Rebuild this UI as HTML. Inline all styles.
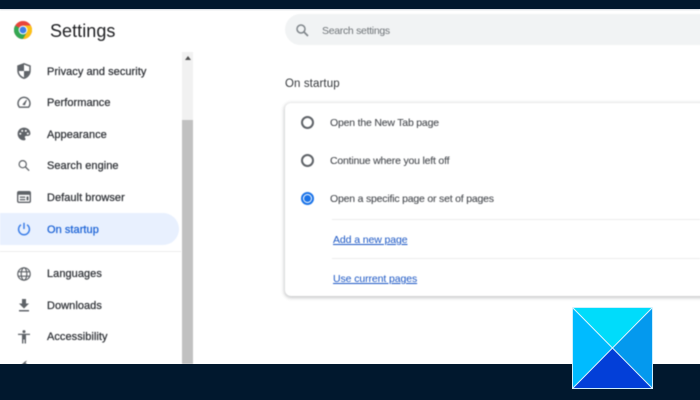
<!DOCTYPE html>
<html><head><meta charset="utf-8">
<style>
html,body{margin:0;padding:0;background:#fff}
#p{position:relative;width:700px;height:400px;overflow:hidden;background:#fff;font-family:"Liberation Sans",sans-serif;color:#3c4043}
#b{position:absolute;left:0;top:0;width:700px;height:400px;filter:blur(.4px)}
.t{position:absolute;white-space:nowrap;font-size:11px;line-height:14px}
.n{left:47px;font-weight:400;color:#2f3237;letter-spacing:.05px;-webkit-text-stroke:.25px #2f3237}
.o{left:330px;font-size:10.5px;color:#4a4d52;letter-spacing:-.2px;-webkit-text-stroke:.1px #4a4d52}
.l{left:333px;font-size:10.5px;color:#1a56c4;text-decoration:underline;letter-spacing:-.1px}
svg{position:absolute;display:block}
.r{position:absolute;left:301px;width:9px;height:9px;border:2px solid #5f6368;border-radius:50%}
</style></head><body><div id="p">
<div id="b">
<div style="position:absolute;left:0;top:9px;width:700px;height:1px;background:#c8d0d6"></div>

<svg style="left:14px;top:21px" width="18" height="18" viewBox="0 0 18 18">
<circle cx="9" cy="9" r="9" fill="#e8453c"/>
<path d="M9 9L1.200 4.500A9 9 0 0 0 9 18L13.500 10z" fill="#34a853"/>
<path d="M9 4.500H16.800A9 9 0 0 1 9 18L13 11z" fill="#fbc116"/>
<circle cx="9" cy="9" r="4.400" fill="#fff"/><circle cx="9" cy="9" r="3.400" fill="#3f7fe8"/>
</svg>
<div class="t" style="left:50px;top:20px;font-size:18px;line-height:22px;color:#202124;letter-spacing:.05px">Settings</div>

<div style="position:absolute;left:182px;top:52px;width:11px;height:312px;background:#f1f1f1"></div>
<div style="position:absolute;left:182px;top:120px;width:11px;height:244px;background:#c1c1c1"></div>
<div style="position:absolute;left:185px;top:56px;width:0;height:0;border-left:3px solid transparent;border-right:3px solid transparent;border-bottom:4px solid #505050"></div>

<div style="position:absolute;left:0;top:213px;width:179px;height:32px;background:#e8f0fe;border-radius:0 16px 16px 0"></div>
<div style="position:absolute;left:0;top:251px;width:181px;height:1px;background:#ececec"></div>

<svg style="left:17px;top:63px" width="14" height="16" viewBox="0 0 14 16"><path d="M7 .8L1 3v4.600c0 3.600 2.600 6.600 6 7.600 3.400-1 6-4 6-7.600V3z" fill="none" stroke="#5f6368" stroke-width="1.500"/><path d="M7 1v7H1.500V3.400zM7 8h5.400c-.3 3-2.600 5.400-5.400 6.400z" fill="#5f6368"/></svg>
<svg style="left:17px;top:96px" width="14" height="13" viewBox="0 0 14 13"><path d="M2.400 11.200A6 6 0 1 1 11.600 11.200z" fill="none" stroke="#5f6368" stroke-width="1.400" stroke-linejoin="round"/><path d="M6 8.400L9.600 4 7.600 8.900z" fill="#5f6368" stroke="#5f6368" stroke-width=".8"/></svg>
<svg style="left:17px;top:127px" width="14" height="14" viewBox="0 0 14 14"><path d="M7 .6C3.400.6.600 3.300.6 6.900s2.800 6.500 6.400 6.500c1 0 1.500-.7 1.500-1.300 0-.9-.7-1.100-.7-2 0-.7.6-1.200 1.300-1.200h1.600c1.900 0 2.700-1.200 2.700-2.500C13.400 3.100 10.600.6 7 .6z" fill="#5f6368"/><circle cx="3.300" cy="6.800" r="1" fill="#fff"/><circle cx="5.200" cy="3.900" r="1" fill="#fff"/><circle cx="8.800" cy="3.900" r="1" fill="#fff"/><circle cx="10.800" cy="6.600" r="1" fill="#fff"/></svg>
<svg style="left:18px;top:159px" width="12" height="13" viewBox="0 0 14 14"><circle cx="5.500" cy="5.500" r="4.200" fill="none" stroke="#5f6368" stroke-width="1.400"/><path d="M8.600 8.600L13 13" stroke="#5f6368" stroke-width="1.500"/></svg>
<svg style="left:17px;top:191px" width="14" height="12" viewBox="0 0 14 12"><rect x=".7" y=".7" width="12.600" height="10.600" rx="1.200" fill="none" stroke="#5f6368" stroke-width="1.400"/><rect x="1" y="1" width="12" height="2.800" fill="#5f6368"/><rect x="2.800" y="5.500" width="5.500" height="1.300" fill="#5f6368"/><rect x="2.800" y="8" width="5.500" height="1.300" fill="#5f6368"/><rect x="9.500" y="5.500" width="2" height="3.800" fill="#5f6368"/></svg>
<svg style="left:17px;top:222px" width="14" height="14" viewBox="0 0 14 14"><path d="M4 2.800A5.400 5.400 0 1 0 10 2.800" fill="none" stroke="#3b7ee8" stroke-width="1.500"/><path d="M7 .8V7" stroke="#3b7ee8" stroke-width="1.500"/></svg>
<svg style="left:17px;top:267px" width="14" height="14" viewBox="0 0 14 14" fill="none" stroke="#5f6368" stroke-width="1.200"><circle cx="7" cy="7" r="6.200"/><ellipse cx="7" cy="7" rx="2.800" ry="6.200"/><path d="M1.200 4.800H12.800M1.200 9.200H12.800"/></svg>
<svg style="left:18px;top:299px" width="12" height="13" viewBox="0 0 12 13"><path d="M4 0H8V4.500H11L6 9.500 1 4.500H4z" fill="#5f6368"/><rect x="1" y="11" width="10" height="1.500" fill="#5f6368"/></svg>
<svg style="left:17px;top:330px" width="14" height="14" viewBox="0 0 14 14"><circle cx="7" cy="1.600" r="1.500" fill="#5f6368"/><path d="M1 3.700H13V5H9V13.500H7.600V9.500H6.400V13.500H5V5H1z" fill="#5f6368"/></svg>
<svg style="left:18px;top:360px" width="12" height="6" viewBox="0 0 12 6"><path d="M3 5L7 1.500 9 .5 7.500 3 10 5z" fill="#5f6368"/></svg>

<div class="t n" style="top:65px">Privacy and security</div>
<div class="t n" style="top:96px">Performance</div>
<div class="t n" style="top:128px">Appearance</div>
<div class="t n" style="top:159px">Search engine</div>
<div class="t n" style="top:191px">Default browser</div>
<div class="t n" style="top:223px;color:#1a62d6;-webkit-text-stroke:.25px #1a62d6">On startup</div>
<div class="t n" style="top:267px">Languages</div>
<div class="t n" style="top:299px">Downloads</div>
<div class="t n" style="top:330px">Accessibility</div>

<div style="position:absolute;left:285px;top:14px;width:440px;height:31px;background:#f1f3f4;border-radius:16px"></div>
<svg style="left:296px;top:24px" width="13" height="13" viewBox="0 0 13 13"><circle cx="5" cy="5" r="4" fill="none" stroke="#80868b" stroke-width="1.500"/><path d="M8 8L12 12" stroke="#80868b" stroke-width="1.700"/></svg>
<div class="t" style="left:322px;top:24px;font-size:10.5px;color:#6f7478;letter-spacing:-.3px">Search settings</div>

<div class="t" style="left:285px;top:77px;font-size:11.5px;color:#35383c;letter-spacing:.1px">On startup</div>

<div style="position:absolute;left:285px;top:103px;width:440px;height:193px;background:#fff;border-radius:6px;box-shadow:0 1px 3px 1px rgba(60,64,67,.28)"></div>

<div class="r" style="top:116px"></div>
<div class="t o" style="top:116px">Open the New Tab page</div>
<div class="r" style="top:154px"></div>
<div class="t o" style="top:154px">Continue where you left off</div>
<div class="r" style="top:192px;border-color:#1a73e8"></div>
<div style="position:absolute;left:304px;top:195px;width:7px;height:7px;border-radius:50%;background:#1a73e8"></div>
<div class="t o" style="top:192px">Open a specific page or set of pages</div>
<div style="position:absolute;left:332px;top:219px;width:368px;height:1px;background:#ececec"></div>
<div class="t l" style="top:233px">Add a new page</div>
<div style="position:absolute;left:332px;top:258px;width:368px;height:1px;background:#ececec"></div>
<div class="t l" style="top:272px">Use current pages</div>
</div>

<div style="position:absolute;left:0;top:0;width:700px;height:9px;background:#01182e"></div>
<div style="position:absolute;left:0;top:364px;width:700px;height:36px;background:#01182e"></div>

<svg style="left:572px;top:307px" width="81" height="82" viewBox="0 0 82 82" preserveAspectRatio="none">
<rect x="0" y="0" width="82" height="82" fill="#cdeffd"/>
<path d="M1 1H81L41 41z" fill="#00dcfb"/>
<path d="M81 1V81L41 41z" fill="#0499ee"/>
<path d="M1 81H81L41 41z" fill="#033fd8"/>
<path d="M1 1V81L41 41z" fill="#00bbff"/>
<path d="M0 0L82 82M82 0L0 82" stroke="#e6f6fd" stroke-width="1"/>
</svg>
</div></body></html>
